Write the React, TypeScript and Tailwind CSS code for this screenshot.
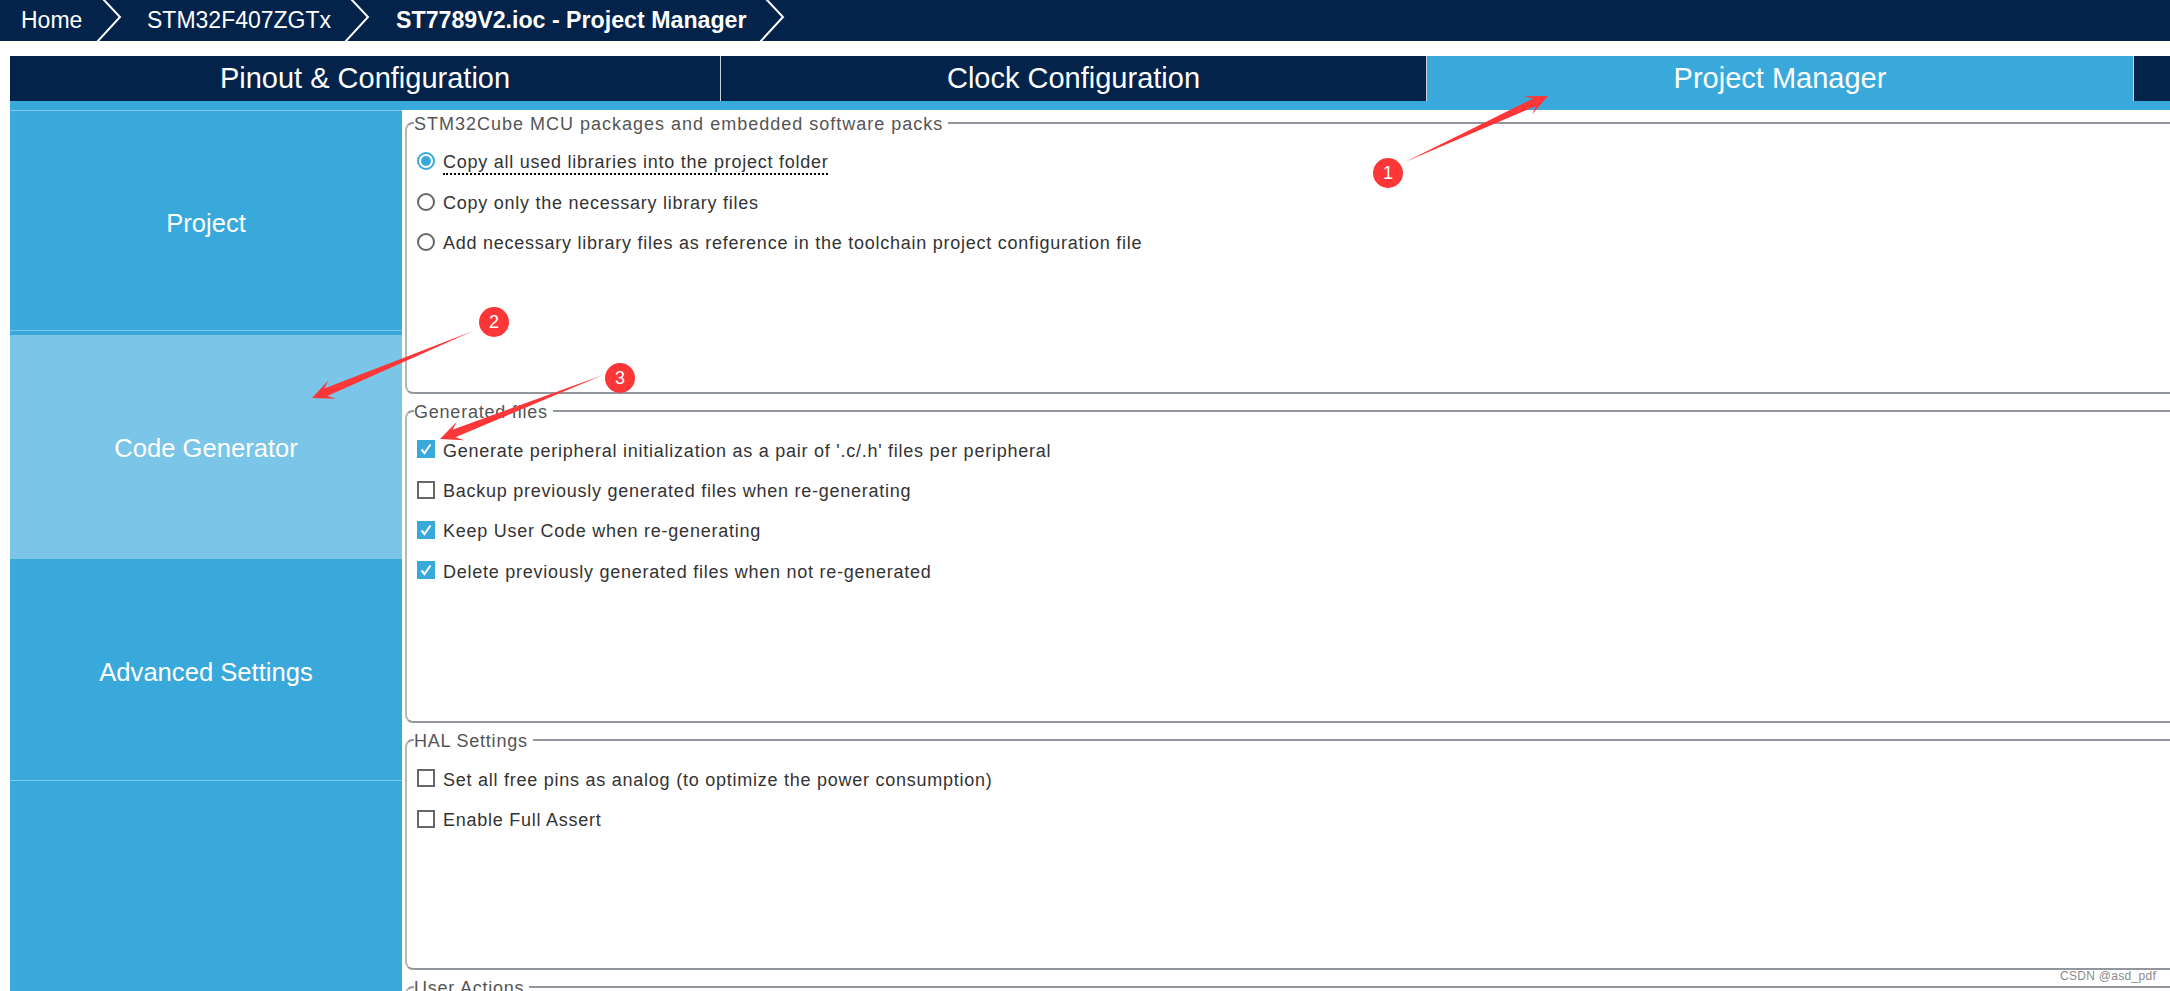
const sidebarLine = 'h-px bg-[#7ec8eb]';

function arrowPoints(tx: number, ty: number, hx: number, hy: number) {
  const len = Math.hypot(hx - tx, hy - ty);
  const ux = (hx - tx) / len;
  const uy = (hy - ty) / len;
  const at = (back: number, side: number) =>
    `${hx - ux * back - uy * side},${hy - uy * back + ux * side}`;
  return [at(len, 0), at(15, 4), at(22, 10), at(0, 0), at(22, -10), at(15, -4)].join(' ');
}

function Chevron() {
  return (
    <svg width="26" height="41" viewBox="0 0 26 41" className="shrink-0">
      <path d="M7 -1 L24 17 L1 42" fill="none" stroke="#fff" strokeWidth="2" />
    </svg>
  );
}

function Marker({ n, className }: { n: number; className: string }) {
  return (
    <div
      className={`absolute w-[30px] h-[30px] rounded-full bg-[#fd3737] text-white text-[18px] leading-[30px] text-center ${className}`}
    >
      {n}
    </div>
  );
}

function Radio({ checked }: { checked?: boolean }) {
  return (
    <span
      className={`w-[18px] h-[18px] rounded-full border-2 flex items-center justify-center shrink-0 ${
        checked ? 'border-[#39a9dc]' : 'border-[#666666]'
      }`}
    >
      {checked && <span className="w-[10px] h-[10px] rounded-full bg-[#39a9dc]" />}
    </span>
  );
}

function Checkbox({ checked }: { checked?: boolean }) {
  if (checked) {
    return (
      <span className="w-[18px] h-[18px] bg-[#39a9dc] flex items-center justify-center shrink-0">
        <svg width="14" height="14" viewBox="0 0 14 14">
          <path d="M2.5 7.5 L5.5 11 L11.5 2.5" fill="none" stroke="#fff" strokeWidth="2" />
        </svg>
      </span>
    );
  }
  return <span className="w-[18px] h-[18px] border-2 border-[#666666] bg-white shrink-0" />;
}

function Row({ children, label, focus }: { children: React.ReactNode; label: string; focus?: boolean }) {
  return (
    <div className="h-[40.4px] flex items-center gap-2">
      {children}
      <span
        className={`mt-[3px] text-[18px] leading-[22px] tracking-[0.75px] text-[#333333] ${
          focus ? 'border-b-2 border-dotted border-black' : ''
        }`}
      >
        {label}
      </span>
    </div>
  );
}

function Panel({ title, wide, className, children }: { title: string; wide?: boolean; className: string; children?: React.ReactNode }) {
  return (
    <fieldset
      className={`-mr-5 shrink-0 rounded-[8px] border-y-2 border-y-[#91979c] border-l-2 border-l-[#b4b8bb] border-r-0 ${className}`}
    >
      <legend className={`ml-[7px] pr-[5px] text-[18px] leading-[24px] text-[#555555] ${wide ? 'tracking-[1px]' : 'tracking-[0.78px]'}`}>
        <span className="relative top-px">{title}</span>
      </legend>
      <div className="pt-[6px] pl-[10px]">{children}</div>
    </fieldset>
  );
}

export default function App() {
  return (
    <div className="relative w-[2170px] h-[991px] overflow-hidden bg-white font-['Liberation_Sans',Arial,sans-serif]">
      <header className="h-[41px] bg-[#03234b] flex items-center text-white text-[23px] pl-[21px]">
        <span className="w-[75px]">Home</span>
        <Chevron />
        <span className="ml-[25px] w-[197px]">STM32F407ZGTx</span>
        <Chevron />
        <span className="ml-[26px] w-[363px] font-bold text-[23.2px]">ST7789V2.ioc - Project Manager</span>
        <Chevron />
      </header>

      <nav className="mt-[15px] ml-[10px] h-[45px] flex bg-[#03234b] text-white text-[29px]">
        <div className="w-[711px] flex items-center justify-center border-r border-[#c8d0d8]">Pinout &amp; Configuration</div>
        <div className="w-[705px] flex items-center justify-center">Clock Configuration</div>
        <div className="w-[708px] flex items-center justify-center bg-[#39a9dc] border-x border-[#c8d0d8]">Project Manager</div>
      </nav>
      <div className="ml-[10px] h-[9px] bg-[#39a9dc]" />

      <div className="flex">
        <aside className="ml-[10px] w-[392px] h-[881px] shrink-0 flex flex-col bg-[#39a9dc] text-white text-[25.6px]">
          <div className={sidebarLine} />
          <div className="h-[219px] pt-[5px] flex items-center justify-center">Project</div>
          <div className={sidebarLine} />
          <div className="h-[4px]" />
          <div className="h-[224px] pt-[2px] flex items-center justify-center bg-[#7bc5e8]">Code Generator</div>
          <div className="h-[221px] pt-[6px] flex items-center justify-center">Advanced Settings</div>
          <div className={sidebarLine} />
        </aside>

        <main className="flex-1 min-w-0 pl-[3px] pt-px flex flex-col gap-[5px]">
          <Panel title="STM32Cube MCU packages and embedded software packs" wide className="h-[283px]">
            <Row label="Copy all used libraries into the project folder" focus><Radio checked /></Row>
            <Row label="Copy only the necessary library files"><Radio /></Row>
            <Row label="Add necessary library files as reference in the toolchain project configuration file"><Radio /></Row>
          </Panel>
          <Panel title="Generated files" className="h-[324px]">
            <Row label="Generate peripheral initialization as a pair of '.c/.h' files per peripheral"><Checkbox checked /></Row>
            <Row label="Backup previously generated files when re-generating"><Checkbox /></Row>
            <Row label="Keep User Code when re-generating"><Checkbox checked /></Row>
            <Row label="Delete previously generated files when not re-generated"><Checkbox checked /></Row>
          </Panel>
          <Panel title="HAL Settings" className="h-[242px]">
            <Row label="Set all free pins as analog (to optimize the power consumption)"><Checkbox /></Row>
            <Row label="Enable Full Assert"><Checkbox /></Row>
          </Panel>
          <Panel title="User Actions" className="h-[60px]" />
        </main>
      </div>

      <svg width="2170" height="991" className="absolute inset-0 pointer-events-none">
        <polygon points={arrowPoints(1405, 162, 1548, 96)} fill="#fd3737" />
        <polygon points={arrowPoints(473, 331, 312, 398)} fill="#fd3737" />
        <polygon points={arrowPoints(603, 375, 440, 439)} fill="#fd3737" />
      </svg>
      <Marker n={1} className="left-[1373px] top-[158px]" />
      <Marker n={2} className="left-[479px] top-[307px]" />
      <Marker n={3} className="left-[605px] top-[363px]" />

      <div className="absolute left-[2060px] top-[969px] text-[12px] leading-[14px] tracking-[0.3px] text-[#8a8a8a]">CSDN @asd_pdf</div>
    </div>
  );
}
